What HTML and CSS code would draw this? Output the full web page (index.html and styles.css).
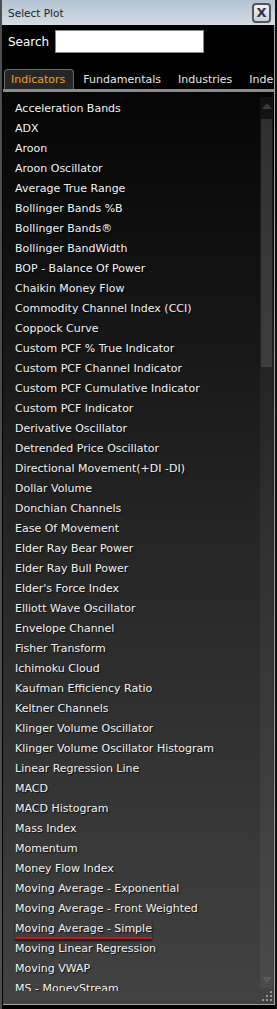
FILE: index.html
```html
<!DOCTYPE html>
<html lang="en">
<head>
    <meta charset="UTF-8">
    <title>Select Plot</title>
    <link rel="stylesheet" href="styles.css">
</head>
<body>
    <div class="dialog">
        <div class="titlebar">
            <span class="title">Select Plot</span>
            <button class="close-button">X</button>
        </div>

        <div class="search-row">
            <label for="search">Search</label>
            <input type="text" id="search">
        </div>

        <div class="tabs">
            <span class="tab active">Indicators</span>
            <span class="tab">Fundamentals</span>
            <span class="tab">Industries</span>
            <span class="tab">Inde</span>
        </div>
        <div class="divider"></div>

        <div class="list-wrap">
            <ul class="plot-list">
                <li>Acceleration Bands</li>
                <li>ADX</li>
                <li>Aroon</li>
                <li>Aroon Oscillator</li>
                <li>Average True Range</li>
                <li>Bollinger Bands %B</li>
                <li>Bollinger Bands&reg;</li>
                <li>Bollinger BandWidth</li>
                <li>BOP - Balance Of Power</li>
                <li>Chaikin Money Flow</li>
                <li>Commodity Channel Index (CCI)</li>
                <li>Coppock Curve</li>
                <li>Custom PCF % True Indicator</li>
                <li>Custom PCF Channel Indicator</li>
                <li>Custom PCF Cumulative Indicator</li>
                <li>Custom PCF Indicator</li>
                <li>Derivative Oscillator</li>
                <li>Detrended Price Oscillator</li>
                <li>Directional Movement(+DI -DI)</li>
                <li>Dollar Volume</li>
                <li>Donchian Channels</li>
                <li>Ease Of Movement</li>
                <li>Elder Ray Bear Power</li>
                <li>Elder Ray Bull Power</li>
                <li>Elder's Force Index</li>
                <li>Elliott Wave Oscillator</li>
                <li>Envelope Channel</li>
                <li>Fisher Transform</li>
                <li>Ichimoku Cloud</li>
                <li>Kaufman Efficiency Ratio</li>
                <li>Keltner Channels</li>
                <li>Klinger Volume Oscillator</li>
                <li>Klinger Volume Oscillator Histogram</li>
                <li>Linear Regression Line</li>
                <li>MACD</li>
                <li>MACD Histogram</li>
                <li>Mass Index</li>
                <li>Momentum</li>
                <li>Money Flow Index</li>
                <li>Moving Average - Exponential</li>
                <li>Moving Average - Front Weighted</li>
                <li><span class="marked">Moving Average - Simple</span></li>
                <li>Moving Linear Regression</li>
                <li>Moving VWAP</li>
                <li>MS - MoneyStream</li>
            </ul>
            <div class="scrollbar">
                <div class="arrow up"></div>
                <div class="track">
                    <div class="thumb"></div>
                </div>
                <div class="arrow down"></div>
                <div class="grip">
                    <svg width="11" height="11" viewBox="0 0 11 11">
                        <rect x="8" y="0" width="2" height="2" fill="#9a9a9a"/>
                        <rect x="4" y="4" width="2" height="2" fill="#9a9a9a"/>
                        <rect x="8" y="4" width="2" height="2" fill="#9a9a9a"/>
                        <rect x="0" y="8" width="2" height="2" fill="#9a9a9a"/>
                        <rect x="4" y="8" width="2" height="2" fill="#9a9a9a"/>
                        <rect x="8" y="8" width="2" height="2" fill="#9a9a9a"/>
                    </svg>
                </div>
            </div>
        </div>
    </div>
</body>
</html>
```

FILE: styles.css
```css
:root {
    --frame: #4e4e4e;
    --edge: #a4a4a4;
    --text: #f4f4f4;
    --accent: #f0a21e;
}

html, body {
    margin: 0;
    height: 100%;
    background: #000;
}

body {
    font-family: "DejaVu Sans", Verdana, sans-serif;
    overflow: hidden;
}

.dialog {
    width: 277px;
    height: 1009px;
    box-sizing: border-box;
    display: flex;
    flex-direction: column;
    border-left: 2px solid var(--frame);
    border-right: 2px solid #111;
    background: #000;
}

.titlebar {
    height: 25px;
    flex: none;
    display: flex;
    align-items: center;
    justify-content: space-between;
    padding: 0 4px 0 6px;
    background: linear-gradient(#b4c4d4, #d2dce6);
}

.title {
    font-size: 10.5px;
    color: #1e1e1e;
}

.close-button {
    width: 19px;
    height: 20px;
    padding: 0;
    border: 2px solid #555;
    border-radius: 4px;
    background: linear-gradient(#eef2f6, #c8d2dc);
    color: #333;
    font-family: "DejaVu Sans", sans-serif;
    font-weight: bold;
    font-size: 13px;
    line-height: 15px;
}

.search-row {
    flex: none;
    display: flex;
    align-items: center;
    gap: 6px;
    padding: 5px 0 7px 6px;
    border-right: 1px solid var(--edge);
}

.search-row label {
    font-size: 12px;
    color: #fff;
}

.search-row input {
    width: 149px;
    height: 23px;
    box-sizing: border-box;
    border: 1px solid #888;
    background: #fff;
    margin: 0;
}

.tabs {
    flex: none;
    display: flex;
    align-items: flex-end;
    height: 29px;
    padding-left: 2px;
    overflow: hidden;
    white-space: nowrap;
    border-right: 1px solid var(--edge);
}

.tab {
    font-size: 11px;
    line-height: 19px;
    color: #e8e8e8;
    padding: 0 8px 0 9px;
    flex: none;
}

.tab.active {
    color: var(--accent);
    background: #262626;
    border: 1px solid #6a6a6a;
    border-bottom: none;
    border-radius: 4px 4px 0 0;
    padding: 0 8px 0 6px;
}

.divider {
    flex: none;
    height: 3px;
    margin-left: 1px;
    background: #8a8a8a;
    border-right: 1px solid var(--edge);
}

.list-wrap {
    flex: 1;
    min-height: 0;
    display: flex;
    margin-left: 1px;
    border-right: 1px solid var(--edge);
    border-bottom: 1px solid var(--edge);
    margin-bottom: 4px;
    background: linear-gradient(#050505, #262626 50%, #424242);
}

.plot-list {
    flex: 1;
    min-width: 0;
    list-style: none;
    margin: 0 0 13px;
    padding: 7px 0 0 12px;
    overflow: hidden;
}

.plot-list li {
    height: 20px;
    line-height: 20px;
    font-size: 11px;
    color: var(--text);
    white-space: nowrap;
    text-shadow: 1px 1px 1px rgba(0, 0, 0, 0.8);
}

.marked {
    display: inline-block;
    line-height: 17px;
    border-bottom: 2px solid #c8141a;
    box-shadow: 0 2px 2px rgba(0, 0, 0, 0.6);
}

.scrollbar {
    flex: none;
    width: 13px;
    margin: 5px 1px 0 0;
    display: flex;
    flex-direction: column;
}

.arrow {
    height: 17px;
    flex: none;
    display: flex;
    justify-content: center;
    align-items: center;
    background: rgba(255, 255, 255, 0.05);
}

.arrow::before {
    content: '';
    border-left: 5px solid transparent;
    border-right: 5px solid transparent;
}

.arrow.up::before {
    border-bottom: 6px solid #3c3c3c;
}

.arrow.down::before {
    border-top: 6px solid #5a5a5a;
}

.track {
    flex: 1;
    padding-top: 5px;
    background: rgba(255, 255, 255, 0.05);
}

.thumb {
    height: 248px;
    margin: 0 1px;
    background: rgba(255, 255, 255, 0.12);
}

.grip {
    height: 14px;
    flex: none;
    display: flex;
    justify-content: flex-end;
    align-items: flex-end;
    padding: 0 0 2px;
}
```
